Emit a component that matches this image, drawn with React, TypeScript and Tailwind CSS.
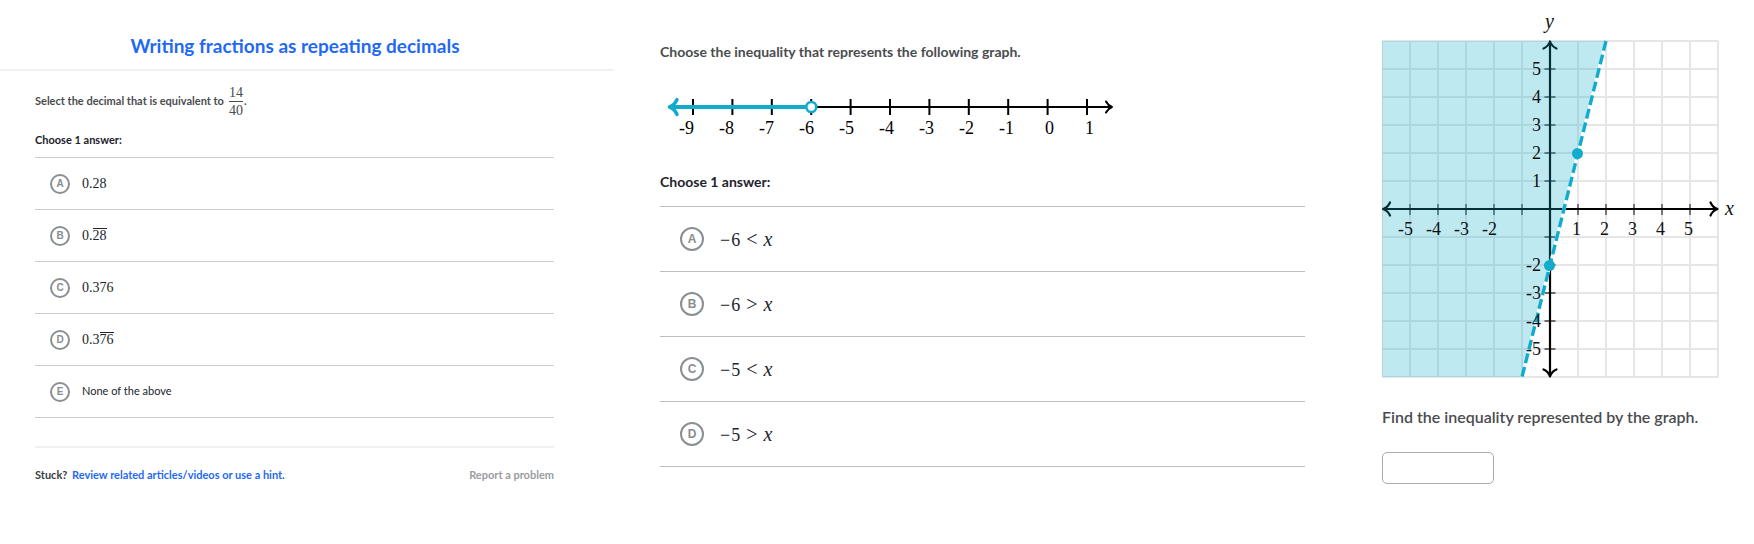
import type { ReactNode } from 'react';

const serif = "'Liberation Serif', serif";

function Choice({ group, letter, large, children }: { group: string; letter: string; large?: boolean; children: ReactNode }) {
  return (
    <li>
      <label
        className={
          large
            ? 'flex h-[65px] cursor-pointer items-center gap-4 border-b border-[#babec2] pl-5 text-[18px]'
            : 'flex h-[52px] cursor-pointer items-center gap-3 border-b border-[#cccfd1] pl-[15px] text-[14px]'
        }
      >
        <span className={large ? 'grid size-6' : 'grid size-5'}>
          <input
            type="radio"
            name={group}
            value={letter}
            className="col-start-1 row-start-1 size-full cursor-pointer appearance-none rounded-full border-2 border-[#8a8f95] checked:bg-blue-100"
          />
          <span
            className={
              large
                ? 'pointer-events-none col-start-1 row-start-1 place-self-center font-[Liberation_Sans,sans-serif] text-[12px] leading-none font-bold text-[#888d93]'
                : 'pointer-events-none col-start-1 row-start-1 place-self-center font-[Liberation_Sans,sans-serif] text-[10px] leading-none font-bold text-[#888d93]'
            }
          >
            {letter}
          </span>
        </span>
        {children}
      </label>
    </li>
  );
}

function Decimal({ fixed, repeating }: { fixed: string; repeating?: string }) {
  return (
    <span className="flex font-[Liberation_Serif,serif] text-[14px] leading-none text-[#21242c]">
      <span className="pt-px">{fixed}</span>
      {repeating && <span className="border-t border-[#21242c]">{repeating}</span>}
    </span>
  );
}

function Inequality({ value, sign }: { value: string; sign: string }) {
  return (
    <span className="flex items-baseline gap-[6px] font-[Liberation_Serif,serif] text-[18px] leading-none text-[#21242c]">
      <span className="flex gap-px">
        <span>−</span>
        <span>{value}</span>
      </span>
      <span className="text-[20px] leading-none">{sign}</span>
      <i className="text-[20px] leading-none">x</i>
    </span>
  );
}

function DecimalsExercise() {
  return (
    <section className="min-w-0">
      <header className="border-b-2 border-[#f0f1f2] pt-[31px] pr-6 pb-2">
        <h1 className="text-center text-[19px] leading-[30px] font-bold text-[#1f69f4]">Writing fractions as repeating decimals</h1>
      </header>
      <div className="pr-[60px] pl-[35px]">
        <p className="flex h-[60px] items-center gap-[5px] text-[11px] font-bold text-[#4a4c50]">
          Select the decimal that is equivalent to
          <span className="flex items-center">
            <span className="flex flex-col items-center font-[Liberation_Serif,serif] text-[14px] leading-[17px] font-normal">
              <span className="border-b border-[#4a4c50]">14</span>
              <span>40</span>
            </span>
            <span className="pl-px">.</span>
          </span>
        </p>
        <h2 className="pb-2 text-[11px] leading-[18px] font-bold text-[#21242c]">Choose 1 answer:</h2>
        <ul className="border-t border-[#cccfd1]">
          <Choice group="decimal" letter="A"><Decimal fixed="0.28" /></Choice>
          <Choice group="decimal" letter="B"><Decimal fixed="0." repeating="28" /></Choice>
          <Choice group="decimal" letter="C"><Decimal fixed="0.376" /></Choice>
          <Choice group="decimal" letter="D"><Decimal fixed="0.3" repeating="76" /></Choice>
          <Choice group="decimal" letter="E"><span className="text-[11px] text-[#21242c]">None of the above</span></Choice>
        </ul>
        <footer className="mt-7 flex items-center justify-between border-t-2 border-[#f0f1f2] pt-[18px] text-[11px] leading-[18px] font-bold">
          <p className="text-[#3b3e40]">
            Stuck? <a href="#hints" className="ml-[2px] text-[#1f69f4]">Review related articles/videos or use a hint.</a>
          </p>
          <a href="#report" className="text-[#9a9da1]">Report a problem</a>
        </footer>
      </div>
    </section>
  );
}

function NumberLine() {
  const values = [-9, -8, -7, -6, -5, -4, -3, -2, -1, 0, 1];
  return (
    <svg width="460" height="54" viewBox="0 0 460 54" role="img" aria-label="Number line" className="max-w-full">
      <path d="M151 17H451" stroke="#000" strokeWidth="2" />
      <path d="M446 11.5C447.500 14.500 449.500 16 452 17C449.500 18 447.500 19.500 446 22.500" fill="none" stroke="#000" strokeWidth="2" strokeLinecap="round" strokeLinejoin="round" />
      {values.map((v, i) => (
        <g key={v}>
          <path d={`M${33 + i * 39.4} 9v16`} stroke="#000" strokeWidth="2" />
          <text x={34 + i * 40} y="44" textAnchor="end" fontSize="18" fontFamily={serif}>{v}</text>
        </g>
      ))}
      <path d="M10 17H147" stroke="#11accd" strokeWidth="4" />
      <path d="M17 9.500C15.500 13 12.500 16 9.500 17C12.500 18 15.500 21 17 24.500" fill="none" stroke="#11accd" strokeWidth="3.500" strokeLinecap="round" strokeLinejoin="round" />
      <circle cx="151.300" cy="17" r="5" fill="#fff" stroke="#11accd" strokeWidth="2.600" />
    </svg>
  );
}

function InequalityExercise() {
  return (
    <section className="min-w-0 pt-[42px] pr-[39px] pl-[46px]">
      <p className="text-[14px] leading-5 font-bold text-[#4a4c50]">Choose the inequality that represents the following graph.</p>
      <div className="pt-7">
        <NumberLine />
      </div>
      <h2 className="pt-[28px] pb-[14px] text-[14px] leading-5 font-bold text-[#21242c]">Choose 1 answer:</h2>
      <ul className="border-t border-[#babec2]">
        <Choice large group="inequality" letter="A"><Inequality value="6" sign="<" /></Choice>
        <Choice large group="inequality" letter="B"><Inequality value="6" sign=">" /></Choice>
        <Choice large group="inequality" letter="C"><Inequality value="5" sign="<" /></Choice>
        <Choice large group="inequality" letter="D"><Inequality value="5" sign=">" /></Choice>
      </ul>
    </section>
  );
}

function CoordinatePlane() {
  const lines = Array.from({ length: 13 }, (_, i) => 1 + i * 28);
  const ticks = [-5, -4, -3, -2, -1, 1, 2, 3, 4, 5];
  const cx = 168;
  const cy = 199;
  return (
    <svg width="360" height="370" viewBox="0 0 360 370" role="img" aria-label="Graph of an inequality">
      {lines.map((p) => (
        <path key={p} d={`M${p - 1} 31V367M0 ${p + 30}H336`} stroke="#e6e6e6" strokeWidth="2" />
      ))}
      {ticks.map((t) => (
        <path key={t} d={`M${cx + t * 28} 194v11M162.500 ${cy - t * 28}h11`} stroke="#6b6b6b" strokeWidth="1.800" />
      ))}
      <path d="M2 199H334M168 33V365" stroke="#000" strokeWidth="2.200" />
      <g fill="none" stroke="#000" strokeWidth="2.200" strokeLinecap="round" strokeLinejoin="round">
        <path d="M8 192.500C6.500 196 4 198 1 199C4 200 6.500 202 8 205.500" />
        <path d="M328.500 192.500C330 196 332.500 198 335.500 199C332.500 200 330 202 328.500 205.500" />
        <path d="M161.500 38.500C165 37 167 34.500 168 31.500C169 34.500 171 37 174.500 38.500" />
        <path d="M161.500 359.500C165 361 167 363.500 168 366.500C169 363.500 171 361 174.500 359.500" />
      </g>
      <path d="M0 31H224L140 367H0Z" fill="#11accd" fillOpacity="0.27" />
      <path d="M224 31L140 367" stroke="#fff" strokeWidth="3" />
      <path d="M224 31L140 367" stroke="#11accd" strokeWidth="3.400" strokeDasharray="10 4" />
      <circle cx="195.500" cy="143.500" r="5.500" fill="#11accd" />
      <circle cx="167.500" cy="255.500" r="5.500" fill="#11accd" />
      <g fontFamily={serif} fontSize="18" fill="#111">
        {ticks.filter((t) => t !== -1).map((t) => (
          <g key={t}>
            <text x={cx + t * 28 + 3} y="225" textAnchor="end">{t}</text>
            <text x="159" y={cy - t * 28 + 6} textAnchor="end">{t}</text>
          </g>
        ))}
        <text x="163" y="18" fontStyle="italic" fontSize="20">y</text>
        <text x="343" y="205" fontStyle="italic" fontSize="20">x</text>
      </g>
    </svg>
  );
}

function GraphExercise() {
  return (
    <section className="min-w-0 pt-[10px] pl-[38px]">
      <CoordinatePlane />
      <label htmlFor="answer" className="block pt-[25px] text-[16px] leading-6 font-semibold text-[#4a4c50]">
        Find the inequality represented by the graph.
      </label>
      <input id="answer" type="text" className="mt-[23px] block h-8 w-28 rounded-[5px] border border-[#a9abad] px-2 font-[Liberation_Serif,serif]" />
    </section>
  );
}

export default function App() {
  return (
    <main className="grid min-h-screen grid-cols-[614fr_730fr_410fr] items-start bg-white font-[Lato,sans-serif]">
      <DecimalsExercise />
      <InequalityExercise />
      <GraphExercise />
    </main>
  );
}
